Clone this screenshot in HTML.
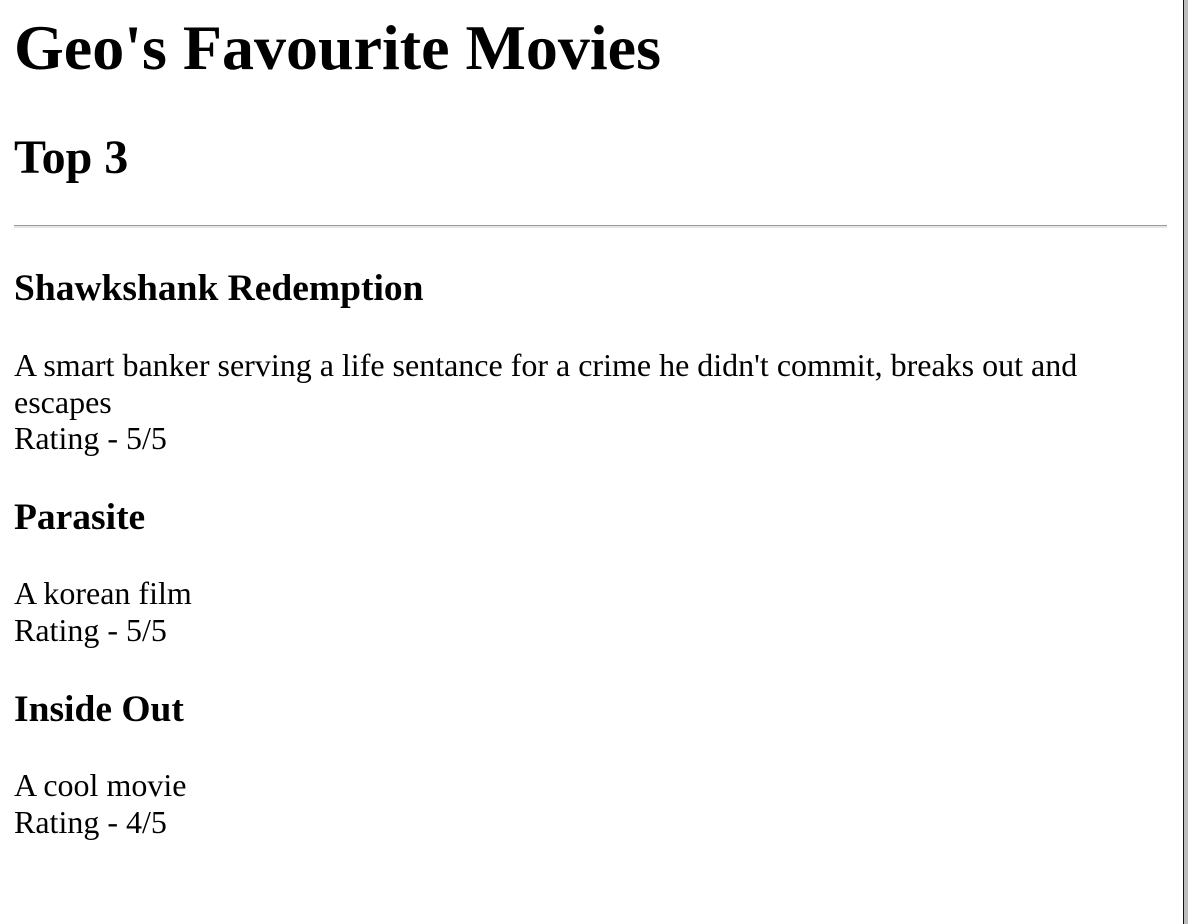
<!DOCTYPE html>
<html><head><style>
html,body{margin:0;padding:0;background:#fff;width:1188px;height:924px;overflow:hidden;position:relative;font-family:"Liberation Serif",serif;color:#000}
.t{position:absolute;left:14px;white-space:nowrap;line-height:1}
</style></head><body>
<div class="t" style="top:16px;font-size:64px;font-weight:bold">Geo's Favourite Movies</div>
<div class="t" style="top:134px;font-size:48px;font-weight:bold">Top 3</div>
<div style="position:absolute;left:14px;top:225px;width:1153px;height:1px;background:#9a9a9a"></div>
<div style="position:absolute;left:14px;top:226px;width:1153px;height:2px;background:#e6e6e6"></div>
<div class="t" style="top:270px;font-size:37.5px;font-weight:bold">Shawkshank Redemption</div>
<div class="t" style="top:349px;font-size:32px">A smart banker serving a life sentance for a crime he didn't commit, breaks out and</div>
<div class="t" style="top:386px;font-size:32px">escapes</div>
<div class="t" style="top:422px;font-size:32px">Rating - 5/5</div>
<div class="t" style="top:499px;font-size:37.5px;font-weight:bold">Parasite</div>
<div class="t" style="top:577px;font-size:32px">A korean film</div>
<div class="t" style="top:614px;font-size:32px">Rating - 5/5</div>
<div class="t" style="top:691px;font-size:37.5px;font-weight:bold">Inside Out</div>
<div class="t" style="top:769px;font-size:32px">A cool movie</div>
<div class="t" style="top:806px;font-size:32px">Rating - 4/5</div>
<div style="position:absolute;left:1183px;top:0;width:1px;height:924px;background:#111"></div>
<div style="position:absolute;left:1184px;top:0;width:4px;height:924px;background:#bdbdbd"></div>
</body></html>
